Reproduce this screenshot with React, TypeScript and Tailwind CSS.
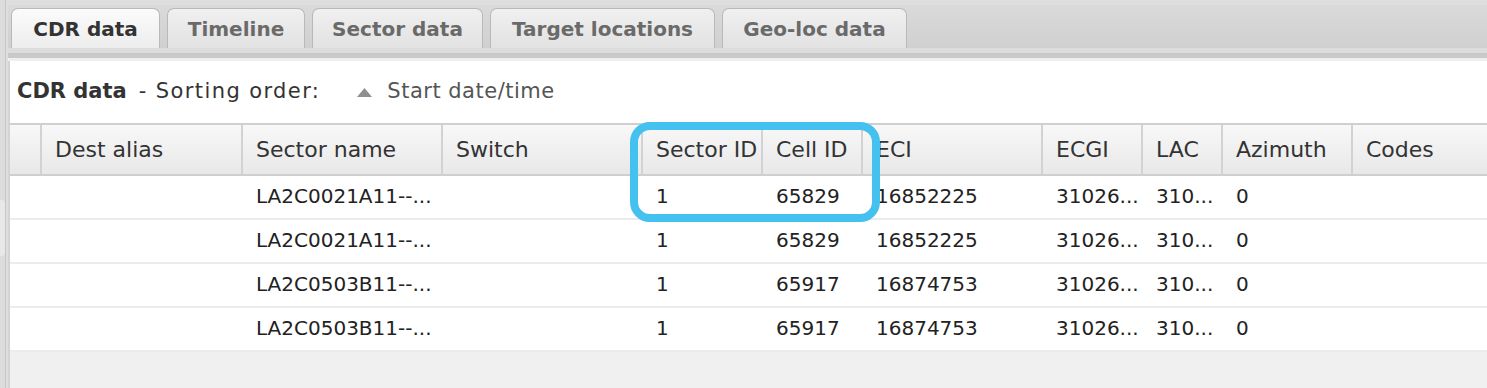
import React from 'react';

// CDR data tab view with the sector/cell table
const TABS = [
  { label: 'CDR data', w: 'w-[149px]', active: true },
  { label: 'Timeline', w: 'w-[138px]' },
  { label: 'Sector data', w: 'w-[171px]' },
  { label: 'Target locations', w: 'w-[225px]' },
  { label: 'Geo-loc data', w: 'w-[185px]' },
];

const COLS = [
  { label: '', w: 'w-[32px]' },
  { label: 'Dest alias', w: 'w-[201px]' },
  { label: 'Sector name', w: 'w-[200px]' },
  { label: 'Switch', w: 'w-[200px]' },
  { label: 'Sector ID', w: 'w-[120px]' },
  { label: 'Cell ID', w: 'w-[100px]' },
  { label: 'ECI', w: 'w-[180px]' },
  { label: 'ECGI', w: 'w-[100px]' },
  { label: 'LAC', w: 'w-[80px]' },
  { label: 'Azimuth', w: 'w-[130px]' },
  { label: 'Codes', w: 'flex-1' },
];

const ROWS = [
  ['', '', 'LA2C0021A11--...', '', '1', '65829', '16852225', '31026...', '310...', '0', ''],
  ['', '', 'LA2C0021A11--...', '', '1', '65829', '16852225', '31026...', '310...', '0', ''],
  ['', '', 'LA2C0503B11--...', '', '1', '65917', '16874753', '31026...', '310...', '0', ''],
  ['', '', 'LA2C0503B11--...', '', '1', '65917', '16874753', '31026...', '310...', '0', ''],
];

export default function App() {
  return (
    <div className="flex h-[388px] w-[1487px] overflow-hidden bg-[#dedede] font-['DejaVu_Sans',sans-serif] text-[#2b2b2b]">
      {/* left splitter */}
      <div className="flex w-[6px] shrink-0 flex-col border-r border-[#c6c6c6] bg-[#dcdcdc] pt-[200px]">
        <div className="h-[56px] w-[5px] rounded-r-sm bg-[#e8e8e8]" />
      </div>

      <div className="flex min-w-0 flex-1 flex-col pl-[2px]">
        {/* tab bar */}
        <div className="mt-[5px] flex h-[43px] items-end gap-[7px] bg-gradient-to-b from-[#dadada] to-[#d0d0d0] pl-[3px]">
          {TABS.map((t) => (
            <div
              key={t.label}
              className={
                t.w +
                ' flex h-[40px] items-center justify-center rounded-t-[7px] border border-b-0 border-[#b9b9b9] text-[20px] font-bold ' +
                (t.active
                  ? 'bg-gradient-to-b from-[#fbfbfb] to-[#ededed] text-[#333]'
                  : 'bg-gradient-to-b from-[#f0f0f0] to-[#e2e2e2] text-[#6a6a6a]')
              }
            >
              {t.label}
            </div>
          ))}
        </div>
        <div className="h-[5px] bg-[#dcdcdc]" />
        <div className="h-[5px] bg-[#c9c9c9]" />
        <div className="h-[3px] bg-[#efefef]" />

        {/* panel */}
        <div className="flex flex-1 flex-col border-l-2 border-[#d4d4d4] bg-white">
          <div className="flex h-[62px] items-center pl-[7px] text-[21px]">
            <span className="font-bold text-[#333]">CDR data</span>
            <span className="ml-[12px] tracking-[1.4px] text-[#333]">- Sorting order:</span>
            <svg className="ml-[37px]" width="15" height="9" viewBox="0 0 15 9">
              <path d="M7.5 0 L15 9 L0 9 Z" fill="#8f8f8f" />
            </svg>
            <span className="ml-[15px] tracking-[0.5px] text-[#555]">Start date/time</span>
          </div>

          <div className="relative">
            <div className="flex h-[53px] border-y-2 border-[#cfcfcf] bg-gradient-to-b from-[#f8f8f8] to-[#e8e8e8]">
              {COLS.map((c, i) => (
                <div
                  key={i}
                  className={
                    c.w +
                    ' flex shrink-0 items-center truncate pl-[13px] text-[22px] text-[#333] ' +
                    (i < COLS.length - 1 ? 'border-r-2 border-[#d2d2d2]' : '')
                  }
                >
                  {c.label}
                </div>
              ))}
            </div>

            {ROWS.map((r, ri) => (
              <div key={ri} className="flex h-[44px] border-b-2 border-[#ececec] pb-[3px]">
                {r.map((v, ci) => (
                  <div
                    key={ci}
                    className={COLS[ci].w + ' flex shrink-0 items-center pl-[13px] text-[20px] text-[#222]'}
                  >
                    {v}
                  </div>
                ))}
              </div>
            ))}

            {/* highlight around Sector ID / Cell ID */}
            <div className="pointer-events-none absolute left-[620px] top-[-1px] h-[100px] w-[250px] rounded-[20px] border-[8px] border-[#45c1ef]" />
          </div>

          <div className="flex-1 bg-[#f0f0f0]" />
        </div>
      </div>
    </div>
  );
}
